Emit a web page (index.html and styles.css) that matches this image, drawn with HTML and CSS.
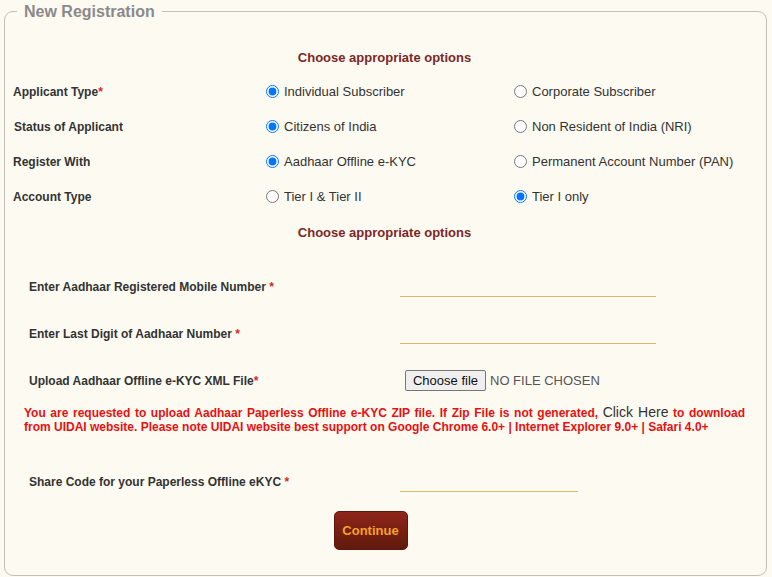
FILE: index.html
```html
<!DOCTYPE html>
<html lang="en">
<head>
<meta charset="utf-8">
<title>New Registration</title>
<link rel="stylesheet" href="styles.css">
</head>
<body>
<fieldset class="panel">
  <legend class="panel-title">New Registration</legend>

  <h3 class="section-title first">Choose appropriate options</h3>

  <div class="options">
    <div class="opt-label">Applicant Type<span class="req">*</span></div>
    <label class="opt"><input type="radio" name="atype" checked> Individual Subscriber</label>
    <label class="opt"><input type="radio" name="atype"> Corporate Subscriber</label>

    <div class="opt-label indent">Status of Applicant</div>
    <label class="opt"><input type="radio" name="status" checked> Citizens of India</label>
    <label class="opt"><input type="radio" name="status"> Non Resident of India (NRI)</label>

    <div class="opt-label">Register With</div>
    <label class="opt"><input type="radio" name="reg" checked> Aadhaar Offline e-KYC</label>
    <label class="opt"><input type="radio" name="reg"> Permanent Account Number (PAN)</label>

    <div class="opt-label">Account Type</div>
    <label class="opt"><input type="radio" name="acct"> Tier I &amp; Tier II</label>
    <label class="opt"><input type="radio" name="acct" checked> Tier I only</label>
  </div>

  <h3 class="section-title second">Choose appropriate options</h3>

  <div class="form">
    <div class="frow">
      <div class="flabel">Enter Aadhaar Registered Mobile Number <span class="req">*</span></div>
      <input class="line-input" type="text">
    </div>
    <div class="frow">
      <div class="flabel">Enter Last Digit of Aadhaar Number <span class="req">*</span></div>
      <input class="line-input" type="text">
    </div>
    <div class="frow">
      <div class="flabel">Upload Aadhaar Offline e-KYC XML File<span class="req">*</span></div>
      <div class="file">
        <button class="file-btn" type="button">Choose file</button>
        <span class="file-name">No file chosen</span>
      </div>
    </div>

    <p class="notice">You are requested to upload Aadhaar Paperless Offline e-KYC ZIP file. If Zip File is not generated, <a class="notice-link" href="#">Click Here</a> to download from UIDAI website. Please note UIDAI website best support on Google Chrome 6.0+ | Internet Explorer 9.0+ | Safari 4.0+</p>

    <div class="frow share">
      <div class="flabel">Share Code for your Paperless Offline eKYC <span class="req">*</span></div>
      <input class="line-input short" type="text">
    </div>

    <div class="actions">
      <button class="continue" type="button">Continue</button>
    </div>
  </div>
</fieldset>
</body>
</html>
```

FILE: styles.css
```css
html, body {
  margin: 0;
  padding: 0;
  background: #fdfaf2;
}

body {
  padding: 2px 5px 0 4px;
  font-family: "Liberation Sans", Arial, sans-serif;
  color: #333;
}

.panel {
  margin: 0;
  padding: 0;
  height: 574px;
  box-sizing: border-box;
  border: 1px solid #c4c0b7;
  border-radius: 9px;
  min-width: 0;
}

.panel-title {
  margin-left: 12px;
  padding: 0 7px;
  font-size: 16px;
  font-weight: bold;
  color: #8a8a8a;
  line-height: 19px;
}

.section-title {
  margin: 0;
  text-align: center;
  font-size: 13px;
  font-weight: bold;
  color: #7a2727;
  line-height: 20px;
}

.section-title.first {
  margin-top: 27px;
  padding-right: 2px;
}

.section-title.second {
  margin-top: 9px;
  padding-right: 2px;
}

.options {
  display: grid;
  grid-template-columns: 253px 248px 1fr;
  grid-auto-rows: 35px;
  align-items: center;
  margin-top: 6px;
  padding-left: 8px;
}

.opt-label {
  font-size: 12px;
  font-weight: bold;
  color: #333;
}

.opt-label.indent {
  padding-left: 1px;
}

.req {
  color: #e02424;
  font-weight: bold;
}

.opt {
  display: flex;
  align-items: center;
  font-size: 13px;
  color: #333;
}

.opt input {
  margin: 0 5px 0 0;
  width: 13px;
  height: 13px;
}

.form {
  margin-top: 20px;
}

.frow {
  display: flex;
  align-items: center;
  height: 47px;
  padding-left: 24px;
}

.flabel {
  width: 371px;
  font-size: 12px;
  font-weight: bold;
  color: #333;
  line-height: 20px;
}

.line-input {
  width: 256px;
  height: 20px;
  box-sizing: border-box;
  border: 0;
  border-bottom: 1px solid #d9b967;
  background: transparent;
  padding: 0;
  outline: none;
}

.line-input.short {
  width: 178px;
}

.file {
  display: flex;
  align-items: center;
  padding-left: 5px;
}

.file-btn {
  width: 81px;
  height: 21px;
  box-sizing: border-box;
  padding: 0;
  font-family: "Liberation Sans", Arial, sans-serif;
  font-size: 13px;
  color: #111;
  background: #efefef;
  border: 1px solid #767676;
  border-radius: 2px;
}

.file-name {
  margin-left: 4px;
  font-size: 13px;
  text-transform: uppercase;
  color: #555;
}

.notice {
  margin: 1px 21px 0 19px;
  font-size: 12px;
  font-weight: bold;
  line-height: 14px;
  color: #e81010;
  text-align: justify;
}

.notice-link {
  font-size: 14px;
  font-weight: normal;
  color: #333;
  text-decoration: none;
}

.frow.share {
  margin-top: 24px;
}

.actions {
  display: flex;
  justify-content: center;
  padding-right: 30px;
  margin-top: 6px;
}

.continue {
  width: 74px;
  height: 39px;
  border: 1px solid #5e170e;
  border-radius: 5px;
  background: linear-gradient(#8f2519, #601a0c);
  color: #f3a22a;
  font-family: "Liberation Sans", Arial, sans-serif;
  font-size: 13px;
  font-weight: bold;
  padding: 0;
}
```
